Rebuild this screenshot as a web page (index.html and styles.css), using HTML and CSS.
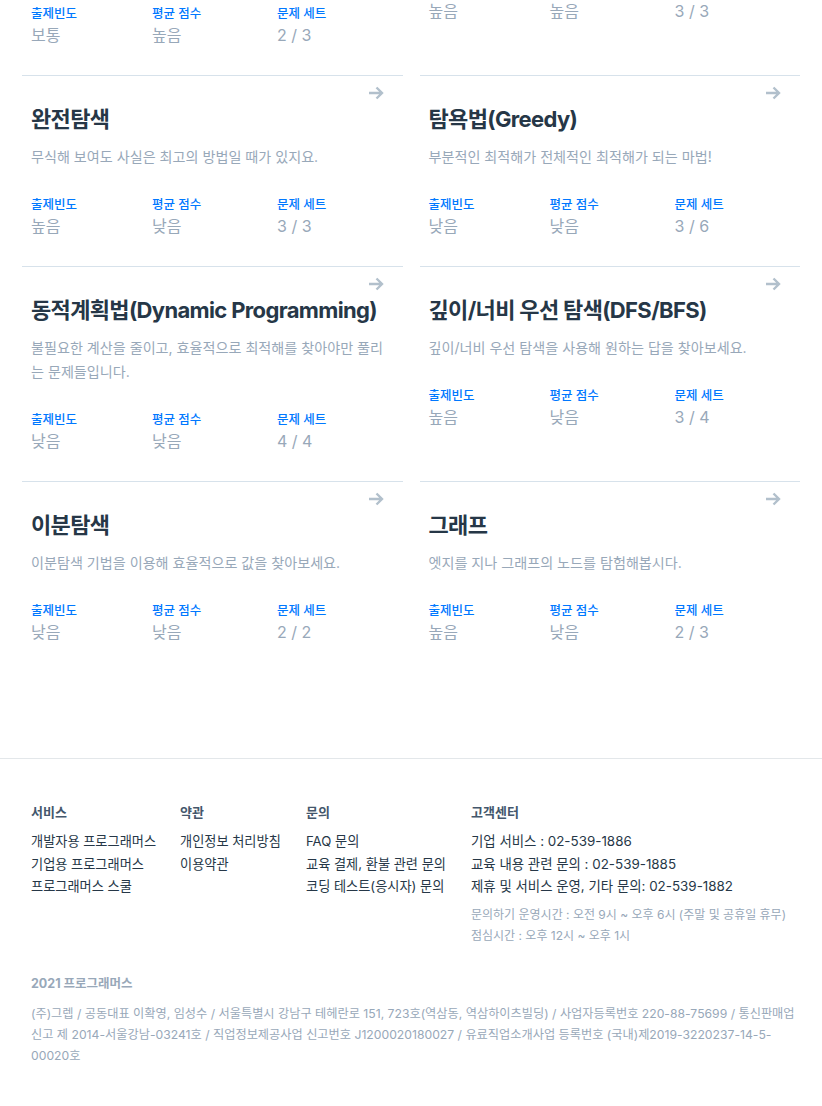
FILE: index.html
```html
<!DOCTYPE html>
<html lang="ko">
<head>
<meta charset="utf-8">
<title>코딩테스트 고득점 Kit</title>
<link rel="stylesheet" href="styles.css">
</head>
<body>
<main class="kit">
  <ul class="kit-grid">
    <li class="kit-card">
      <div class="kit-arrow"><svg width="16" height="14" viewBox="0 0 16 14"><path d="M1 7H14M8.5 1.5L14 7L8.5 12.5" fill="none" stroke="#b2c0cc" stroke-width="2.4"/></svg></div>
      <h3 class="kit-title">힙(Heap)</h3>
      <p class="kit-desc">힙의 특성을 활용하여 우선순위가 높은 데이터를 빠르게 찾고, 효율적으로 문제를 풀어보세요.</p>
      <dl class="kit-stats">
        <div><dt>출제빈도</dt><dd>보통</dd></div>
        <div><dt>평균 점수</dt><dd>높음</dd></div>
        <div><dt>문제 세트</dt><dd>2 / 3</dd></div>
      </dl>
    </li>
    <li class="kit-card">
      <div class="kit-arrow"><svg width="16" height="14" viewBox="0 0 16 14"><path d="M1 7H14M8.5 1.5L14 7L8.5 12.5" fill="none" stroke="#b2c0cc" stroke-width="2.4"/></svg></div>
      <h3 class="kit-title">정렬</h3>
      <p class="kit-desc">정렬을 이용해서 좀 더 쉽게 문제를 해결해 보세요.</p>
      <dl class="kit-stats">
        <div><dt>출제빈도</dt><dd>높음</dd></div>
        <div><dt>평균 점수</dt><dd>높음</dd></div>
        <div><dt>문제 세트</dt><dd>3 / 3</dd></div>
      </dl>
    </li>
    <li class="kit-card">
      <div class="kit-arrow"><svg width="16" height="14" viewBox="0 0 16 14"><path d="M1 7H14M8.5 1.5L14 7L8.5 12.5" fill="none" stroke="#b2c0cc" stroke-width="2.4"/></svg></div>
      <h3 class="kit-title">완전탐색</h3>
      <p class="kit-desc">무식해 보여도 사실은 최고의 방법일 때가 있지요.</p>
      <dl class="kit-stats">
        <div><dt>출제빈도</dt><dd>높음</dd></div>
        <div><dt>평균 점수</dt><dd>낮음</dd></div>
        <div><dt>문제 세트</dt><dd>3 / 3</dd></div>
      </dl>
    </li>
    <li class="kit-card">
      <div class="kit-arrow"><svg width="16" height="14" viewBox="0 0 16 14"><path d="M1 7H14M8.5 1.5L14 7L8.5 12.5" fill="none" stroke="#b2c0cc" stroke-width="2.4"/></svg></div>
      <h3 class="kit-title">탐욕법(Greedy)</h3>
      <p class="kit-desc">부분적인 최적해가 전체적인 최적해가 되는 마법!</p>
      <dl class="kit-stats">
        <div><dt>출제빈도</dt><dd>낮음</dd></div>
        <div><dt>평균 점수</dt><dd>낮음</dd></div>
        <div><dt>문제 세트</dt><dd>3 / 6</dd></div>
      </dl>
    </li>
    <li class="kit-card">
      <div class="kit-arrow"><svg width="16" height="14" viewBox="0 0 16 14"><path d="M1 7H14M8.5 1.5L14 7L8.5 12.5" fill="none" stroke="#b2c0cc" stroke-width="2.4"/></svg></div>
      <h3 class="kit-title">동적계획법(Dynamic Programming)</h3>
      <p class="kit-desc">불필요한 계산을 줄이고, 효율적으로 최적해를 찾아야만 풀리는 문제들입니다.</p>
      <dl class="kit-stats">
        <div><dt>출제빈도</dt><dd>낮음</dd></div>
        <div><dt>평균 점수</dt><dd>낮음</dd></div>
        <div><dt>문제 세트</dt><dd>4 / 4</dd></div>
      </dl>
    </li>
    <li class="kit-card">
      <div class="kit-arrow"><svg width="16" height="14" viewBox="0 0 16 14"><path d="M1 7H14M8.5 1.5L14 7L8.5 12.5" fill="none" stroke="#b2c0cc" stroke-width="2.4"/></svg></div>
      <h3 class="kit-title">깊이/너비 우선 탐색(DFS/BFS)</h3>
      <p class="kit-desc">깊이/너비 우선 탐색을 사용해 원하는 답을 찾아보세요.</p>
      <dl class="kit-stats">
        <div><dt>출제빈도</dt><dd>높음</dd></div>
        <div><dt>평균 점수</dt><dd>낮음</dd></div>
        <div><dt>문제 세트</dt><dd>3 / 4</dd></div>
      </dl>
    </li>
    <li class="kit-card">
      <div class="kit-arrow"><svg width="16" height="14" viewBox="0 0 16 14"><path d="M1 7H14M8.5 1.5L14 7L8.5 12.5" fill="none" stroke="#b2c0cc" stroke-width="2.4"/></svg></div>
      <h3 class="kit-title">이분탐색</h3>
      <p class="kit-desc">이분탐색 기법을 이용해 효율적으로 값을 찾아보세요.</p>
      <dl class="kit-stats">
        <div><dt>출제빈도</dt><dd>낮음</dd></div>
        <div><dt>평균 점수</dt><dd>낮음</dd></div>
        <div><dt>문제 세트</dt><dd>2 / 2</dd></div>
      </dl>
    </li>
    <li class="kit-card">
      <div class="kit-arrow"><svg width="16" height="14" viewBox="0 0 16 14"><path d="M1 7H14M8.5 1.5L14 7L8.5 12.5" fill="none" stroke="#b2c0cc" stroke-width="2.4"/></svg></div>
      <h3 class="kit-title">그래프</h3>
      <p class="kit-desc">엣지를 지나 그래프의 노드를 탐험해봅시다.</p>
      <dl class="kit-stats">
        <div><dt>출제빈도</dt><dd>높음</dd></div>
        <div><dt>평균 점수</dt><dd>낮음</dd></div>
        <div><dt>문제 세트</dt><dd>2 / 3</dd></div>
      </dl>
    </li>
  </ul>
</main>
<footer class="footer">
  <div class="footer-cols">
    <div class="footer-col">
      <h5 class="footer-head">서비스</h5>
      <ul class="footer-links">
        <li>개발자용 프로그래머스</li>
        <li>기업용 프로그래머스</li>
        <li>프로그래머스 스쿨</li>
      </ul>
    </div>
    <div class="footer-col">
      <h5 class="footer-head">약관</h5>
      <ul class="footer-links">
        <li>개인정보 처리방침</li>
        <li>이용약관</li>
      </ul>
    </div>
    <div class="footer-col">
      <h5 class="footer-head">문의</h5>
      <ul class="footer-links">
        <li>FAQ 문의</li>
        <li>교육 결제, 환불 관련 문의</li>
        <li>코딩 테스트(응시자) 문의</li>
      </ul>
    </div>
    <div class="footer-col">
      <h5 class="footer-head">고객센터</h5>
      <ul class="footer-links footer-contact">
        <li>기업 서비스 : 02-539-1886</li>
        <li>교육 내용 관련 문의 : 02-539-1885</li>
        <li>제휴 및 서비스 운영, 기타 문의: 02-539-1882</li>
      </ul>
      <p class="footer-hours">문의하기 운영시간 : 오전 9시 ~ 오후 6시 (주말 및 공휴일 휴무)<br>점심시간 : 오후 12시 ~ 오후 1시</p>
    </div>
  </div>
  <h6 class="footer-copy">2021 프로그래머스</h6>
  <p class="footer-address">(주)그렙 / 공동대표 이확영, 임성수 / 서울특별시 강남구 테헤란로 151, 723호(역삼동, 역삼하이츠빌딩) / 사업자등록번호 220-88-75699 / 통신판매업 신고 제 2014-서울강남-03241호 / 직업정보제공사업 신고번호 J1200020180027 / 유료직업소개사업 등록번호 (국내)제2019-3220237-14-5-00020호</p>
</footer>
</body>
</html>
```

FILE: styles.css
```css
* { box-sizing: border-box; }
html, body { margin: 0; padding: 0; background: #fff; }
body {
  font-family: Inter, "Noto Sans CJK KR", "Noto Sans", sans-serif;
  color: #263747;
  overflow: hidden;
}
.kit { padding: 0 22px; }
.kit-grid {
  list-style: none;
  margin: -140px 0 0;
  padding: 0;
  display: grid;
  grid-template-columns: 1fr 1fr;
  column-gap: 17px;
}
.kit-card {
  border-top: 1px solid #d7e2eb;
  padding: 7px 19px 28px 9px;
}
.kit-arrow {
  height: 20px;
  display: flex;
  align-items: center;
  justify-content: flex-end;
}
.kit-arrow svg { display: block; }
.kit-title {
  margin: 0;
  font-size: 22px;
  line-height: 32px;
  font-weight: 700;
  color: #263747;
  letter-spacing: -0.65px;
}
.kit-desc {
  margin: 10px 0 0;
  font-size: 14.1px;
  line-height: 24px;
  color: #98a8b9;
}
.kit-stats {
  margin: 27px 0 0;
  display: grid;
  grid-template-columns: 121px 125px 1fr;
}
.kit-stats dt {
  font-size: 12.5px;
  line-height: 18px;
  font-weight: 500;
  color: #0078ff;
}
.kit-stats dd {
  margin: 0;
  font-size: 16px;
  line-height: 24px;
  color: #98a8b9;
}
.footer {
  margin-top: 86px;
  border-top: 1px solid #e3e7ea;
  padding: 43px 22px 40px 31px;
}
.footer-cols {
  display: grid;
  grid-template-columns: 149px 126px 165px 1fr;
}
.footer-head {
  margin: 0;
  font-size: 13px;
  line-height: 20px;
  font-weight: 700;
  color: #44576c;
}
.footer-links {
  list-style: none;
  margin: 8px 0 0;
  padding: 0;
  font-size: 13.2px;
  line-height: 22.5px;
  color: #263747;
}
.footer-contact { font-size: 13.4px; }
.footer-hours {
  margin: 6px 0 0;
  font-size: 12px;
  line-height: 21px;
  color: #98a8b9;
}
.footer-copy {
  margin: 28px 0 0;
  font-size: 12.5px;
  line-height: 20px;
  font-weight: 700;
  color: #98a8b9;
}
.footer-address {
  margin: 9px 0 0;
  font-size: 12.2px;
  line-height: 21px;
  color: #98a8b9;
}
```
